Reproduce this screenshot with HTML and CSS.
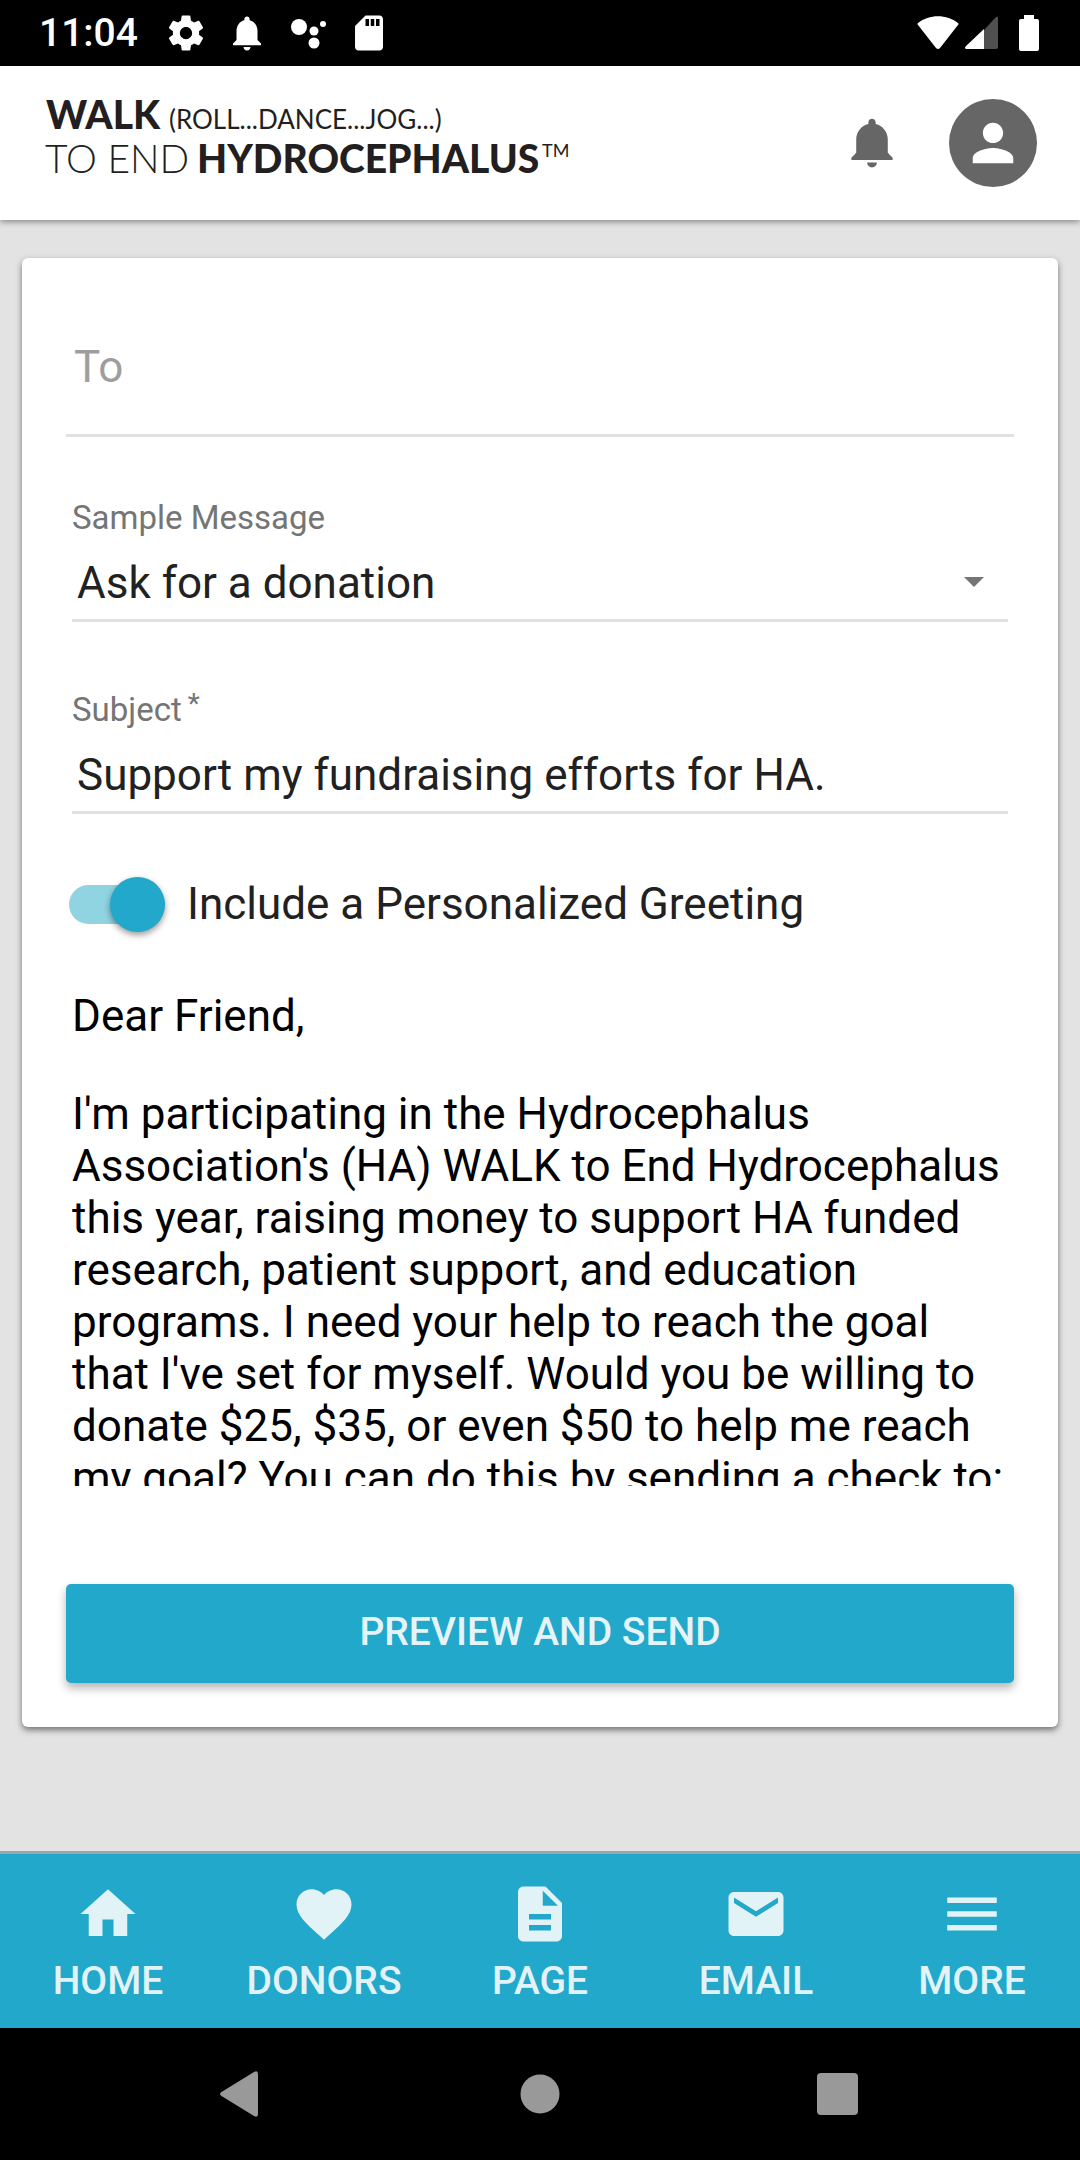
FILE: index.html
```html
<!DOCTYPE html>
<html lang="en">
<head>
  <meta charset="UTF-8">
  <meta name="viewport" content="width=device-width, initial-scale=1.0">
  <title>Walk to End Hydrocephalus</title>
  <link rel="stylesheet" href="styles.css">
</head>
<body>
  <div class="status-bar">
    <span class="time">11:04</span>
    <div class="status-icons">
      <svg width="42" height="42" viewBox="0 0 24 24"><path d="M19.43 12.98c.04-.32.07-.64.07-.98s-.03-.66-.07-.98l2.11-1.65c.19-.15.24-.42.12-.64l-2-3.46c-.12-.22-.39-.3-.61-.22l-2.49 1c-.52-.4-1.08-.73-1.69-.98l-.38-2.65C14.46 2.18 14.25 2 14 2h-4c-.25 0-.46.18-.49.42l-.38 2.65c-.61.25-1.17.59-1.69.98l-2.49-1c-.23-.09-.49 0-.61.22l-2 3.46c-.13.22-.07.49.12.64l2.11 1.65c-.04.32-.07.65-.07.98s.03.66.07.98l-2.11 1.65c-.19.15-.24.42-.12.64l2 3.46c.12.22.39.3.61.22l2.49-1c.52.4 1.08.73 1.69.98l.38 2.65c.03.24.24.42.49.42h4c.25 0 .46-.18.49-.42l.38-2.65c.61-.25 1.17-.59 1.69-.98l2.49 1c.23.09.49 0 .61-.22l2-3.46c.12-.22.07-.49-.12-.64l-2.11-1.65zM12 15.5c-1.93 0-3.5-1.57-3.5-3.5s1.57-3.5 3.5-3.5 3.5 1.57 3.5 3.5-1.57 3.5-3.5 3.5z"/></svg>
      <svg width="42" height="42" viewBox="0 0 24 24"><path d="M12 22c1.1 0 2-.9 2-2h-4c0 1.1.9 2 2 2zm6-6v-5c0-3.07-1.64-5.64-4.5-6.32V4c0-.83-.67-1.5-1.5-1.5s-1.5.67-1.5 1.5v.68C7.63 5.36 6 7.92 6 11v5l-2 2v1h16v-1l-2-2z"/></svg>
      <svg width="42" height="42" viewBox="0 0 42 42"><circle cx="12" cy="15" r="8"/><circle cx="27" cy="19" r="4.500"/><circle cx="27" cy="31" r="5.500"/><circle cx="36" cy="12" r="3"/></svg>
      <svg width="42" height="42" viewBox="0 0 24 24"><path d="M18 2h-8L4.02 8 4 20c0 1.1.9 2 2 2h12c1.1 0 2-.9 2-2V4c0-1.1-.9-2-2-2zm-6 6h-2V4h2v4zm3 0h-2V4h2v4zm3 0h-2V4h2v4z"/></svg>
    </div>
    <div class="signal-icons">
      <svg width="42" height="34" viewBox="0 0 42 34"><path d="M1 9Q0 8 1 7C12-2 30-2 41 7q1 1 0 2L23 32q-2 2-4 0z"/></svg>
      <svg class="cell" width="33" height="34" viewBox="0 0 33 34"><path class="cell-off" d="M19 14 31 1q2-1 2 1v29q0 2-2 2H19z"/><path d="M19 13v20H1q-2-1 0-3z"/></svg>
      <svg width="20" height="36" viewBox="0 0 20 36"><path d="M5 0h10v4h3q2 0 2 2v28q0 2-2 2H2q-2 0-2-2V6q0-2 2-2h3z"/></svg>
    </div>
  </div>

  <header>
    <svg class="logo" width="530" height="90" viewBox="0 0 530 90" role="img" aria-label="Walk to End Hydrocephalus">
      <text class="logo-bold" x="1" y="31">WALK</text>
      <text class="logo-small" x="124" y="31">(ROLL...DANCE...JOG...)</text>
      <text class="logo-light" x="0" y="75">TO END</text>
      <text class="logo-bold" x="152" y="75">HYDROCEPHALUS</text>
      <text class="logo-tm" x="497" y="59">TM</text>
    </svg>
    <button class="bell" aria-label="Notifications">
      <svg width="60" height="60" viewBox="0 0 512 512"><path d="M256 464c22.779 0 41.411-18.719 41.411-41.6h-82.823c0 22.881 18.633 41.6 41.412 41.6zm134.589-124.8V224.8c0-63.44-44.516-117.518-103.53-131.041V79.2c0-17.682-13.457-31.2-31.059-31.2s-31.059 13.518-31.059 31.2v14.559c-59.015 13.523-103.53 67.601-103.53 131.041v114.4L80 380.8v20.8h352v-20.8l-41.411-41.6z"/></svg>
    </button>
    <button class="avatar" aria-label="Profile">
      <svg width="54" height="54" viewBox="0 0 512 512"><path d="M256 256c52.805 0 96-43.201 96-96s-43.195-96-96-96-96 43.201-96 96 43.195 96 96 96zm0 48c-63.598 0-192 32.402-192 96v48h384v-48c0-63.598-128.402-96-192-96z"/></svg>
    </button>
  </header>

  <main>
    <form class="card">
      <input class="to" type="text" placeholder="To" aria-label="To">

      <div class="field">
        <label for="sample">Sample Message</label>
        <div class="select">
          <select id="sample">
            <option>Ask for a donation</option>
          </select>
          <svg width="20" height="10" viewBox="0 0 20 10"><path d="M0 0h20L10 10z"/></svg>
        </div>
      </div>

      <div class="field">
        <label for="subject">Subject<span class="required">*</span></label>
        <input id="subject" type="text" value="Support my fundraising efforts for HA.">
      </div>

      <div class="toggle">
        <input id="greeting" type="checkbox" role="switch" checked>
        <label for="greeting">Include a Personalized Greeting</label>
      </div>

      <label class="dear" for="message">Dear Friend,</label>
      <textarea id="message">I'm participating in the Hydrocephalus Association's (HA) WALK to End Hydrocephalus this year, raising money to support HA funded research, patient support, and education programs. I need your help to reach the goal that I've set for myself. Would you be willing to donate $25, $35, or even $50 to help me reach my goal? You can do this by sending a check to:</textarea>

      <button class="send" type="button">PREVIEW AND SEND</button>
    </form>
  </main>

  <nav class="tabs">
    <a href="#home">
      <svg width="66" height="66" viewBox="0 0 24 24"><path d="M10 20v-6h4v6h5v-8h3L12 3 2 12h3v8z"/></svg>
      HOME
    </a>
    <a href="#donors">
      <svg width="66" height="66" viewBox="0 0 24 24"><path d="M12 21.35l-1.45-1.32C5.4 15.36 2 12.28 2 8.5 2 5.42 4.42 3 7.5 3c1.74 0 3.41.81 4.5 2.09C13.09 3.81 14.76 3 16.5 3 19.58 3 22 5.42 22 8.5c0 3.78-3.4 6.86-8.55 11.54L12 21.35z"/></svg>
      DONORS
    </a>
    <a href="#page">
      <svg width="66" height="66" viewBox="0 0 24 24"><path d="M14 2H6c-1.1 0-1.99.9-1.99 2L4 20c0 1.1.89 2 1.99 2H18c1.1 0 2-.9 2-2V8l-6-6zm2 16H8v-2h8v2zm0-4H8v-2h8v2zm-3-5V3.5L18.5 9H13z"/></svg>
      PAGE
    </a>
    <a href="#email">
      <svg width="66" height="66" viewBox="0 0 24 24"><path d="M20 4H4c-1.1 0-1.99.9-1.99 2L2 18c0 1.1.9 2 2 2h16c1.1 0 2-.9 2-2V6c0-1.1-.9-2-2-2zm0 4l-8 5-8-5V6l8 5 8-5v2z"/></svg>
      EMAIL
    </a>
    <a href="#more">
      <svg width="66" height="66" viewBox="0 0 24 24"><path d="M3 18h18v-2H3v2zm0-5h18v-2H3v2zm0-7v2h18V6H3z"/></svg>
      MORE
    </a>
  </nav>

  <div class="system-nav">
    <button aria-label="Back"><svg width="48" height="48" viewBox="0 0 48 48"><path d="M5.500 26q-3-2 0-4L38 2q4-2 4 2v40q0 4-4 2z"/></svg></button>
    <button aria-label="Home"><svg width="48" height="48" viewBox="0 0 48 48"><circle cx="24" cy="24" r="19.500"/></svg></button>
    <button aria-label="Recent apps"><svg width="48" height="48" viewBox="0 0 48 48"><rect x="1" y="3" width="41" height="42" rx="4"/></svg></button>
  </div>
</body>
</html>
```

FILE: styles.css
```css
* {
  box-sizing: border-box;
}

body {
  margin: 0;
  min-height: 100vh;
  display: flex;
  flex-direction: column;
  background-color: #e3e3e3;
  color: #212121;
  font-family: Roboto, "Liberation Sans", sans-serif;
  font-size: 44px;
  line-height: 52px;
}

button, input, select, textarea {
  font: inherit;
  color: inherit;
  margin: 0;
  padding: 0;
  border: none;
  border-radius: 0;
  outline: none;
  background: none;
}

button {
  cursor: pointer;
}

svg {
  display: block;
  fill: currentColor;
}

/* status bar */
.status-bar {
  display: flex;
  align-items: center;
  height: 66px;
  padding: 0 41px 0 39px;
  background-color: #000;
  color: #fff;
}

.time {
  font-size: 39px;
  font-weight: 500;
}

.status-icons {
  display: flex;
  gap: 19px;
  margin-left: 27px;
}

.signal-icons {
  display: flex;
  align-items: center;
  margin-left: auto;
}

.cell {
  margin: 0 21px 0 6px;
}

.cell-off {
  fill: #505050;
}

/* header */
header {
  display: flex;
  align-items: center;
  height: 154px;
  padding: 0 43px 0 45px;
  background-color: #fff;
  color: #666;
  box-shadow: 0 2px 6px rgba(0, 0, 0, 0.4);
}

.logo {
  fill: #231f20;
  font-family: Lato, sans-serif;
  font-size: 39px;
  overflow: visible;
}

.logo-bold {
  font-weight: 900;
}

.logo-light {
  font-weight: 300;
}

.logo-small {
  font-size: 26px;
}

.logo-tm {
  font-size: 18px;
}

.bell {
  margin-left: auto;
  margin-right: 47px;
}

.avatar {
  display: flex;
  align-items: center;
  justify-content: center;
  width: 88px;
  height: 88px;
  border-radius: 50%;
  background-color: #666;
  color: #fff;
}

/* message form */
main {
  flex-grow: 1;
  padding: 38px 22px;
}

.card {
  display: flex;
  flex-direction: column;
  padding: 44px;
  border-radius: 6px;
  background-color: #fff;
  box-shadow: 0 3px 6px rgba(0, 0, 0, 0.5);
}

.to {
  padding: 39px 8px 41px;
  border-bottom: 3px solid #e0e0e0;
}

.to::placeholder {
  color: #9e9e9e;
  opacity: 1;
}

.field {
  display: flex;
  flex-direction: column;
  gap: 19px;
  margin: 61px 6px 0;
}

.field + .field {
  margin-top: 68px;
}

.field label {
  font-size: 33px;
  line-height: 40px;
  color: #757575;
}

.required {
  margin-left: 6px;
  font-size: 28px;
  line-height: 28px;
  vertical-align: 8px;
}

.field input, .field select {
  width: 100%;
  padding: 0 5px 10px;
  border-bottom: 3px solid #e0e0e0;
}

.select {
  position: relative;
}

.field select {
  display: block;
  appearance: none;
}

.select svg {
  position: absolute;
  right: 24px;
  top: 20px;
  fill: #757575;
  pointer-events: none;
}

.toggle {
  display: flex;
  align-items: center;
  margin: 64px 0 60px 3px;
}

.toggle input {
  appearance: none;
  display: flex;
  align-items: center;
  justify-content: flex-end;
  width: 96px;
  height: 39px;
  margin-right: 22px;
  background-color: #90d3e1;
  border-radius: 20px;
}

.toggle input::before {
  content: "";
  width: 55px;
  height: 55px;
  border-radius: 50%;
  background-color: #22a8ca;
  box-shadow: 0 3px 6px rgba(0, 0, 0, 0.4);
}

.dear {
  margin: 0 6px 46px;
  color: #000;
}

textarea {
  height: 398px;
  margin: 0 6px;
  color: #000;
  resize: none;
  overflow: hidden;
}

.send {
  margin-top: 98px;
  height: 99px;
  padding-bottom: 3px;
  border-radius: 5px;
  background-color: #22a8ca;
  color: #e4f4f9;
  font-size: 39px;
  font-weight: 500;
  box-shadow: 0 5px 10px rgba(0, 0, 0, 0.3);
}

/* bottom tabs */
.tabs {
  display: grid;
  grid-template-columns: repeat(5, 1fr);
  border-top: 3px solid #98a9ad;
  background-color: #22a8ca;
}

.tabs a {
  display: flex;
  flex-direction: column;
  align-items: center;
  gap: 12px;
  padding: 27px 0 25px;
  color: #e2f3f8;
  font-size: 39px;
  font-weight: 500;
  line-height: 44px;
  text-decoration: none;
}

.system-nav {
  display: grid;
  grid-template-columns: repeat(3, 1fr);
  align-items: center;
  height: 132px;
  padding: 0 90px;
  background-color: #000;
}

.system-nav button {
  display: flex;
  justify-content: center;
  color: #999;
}
```
